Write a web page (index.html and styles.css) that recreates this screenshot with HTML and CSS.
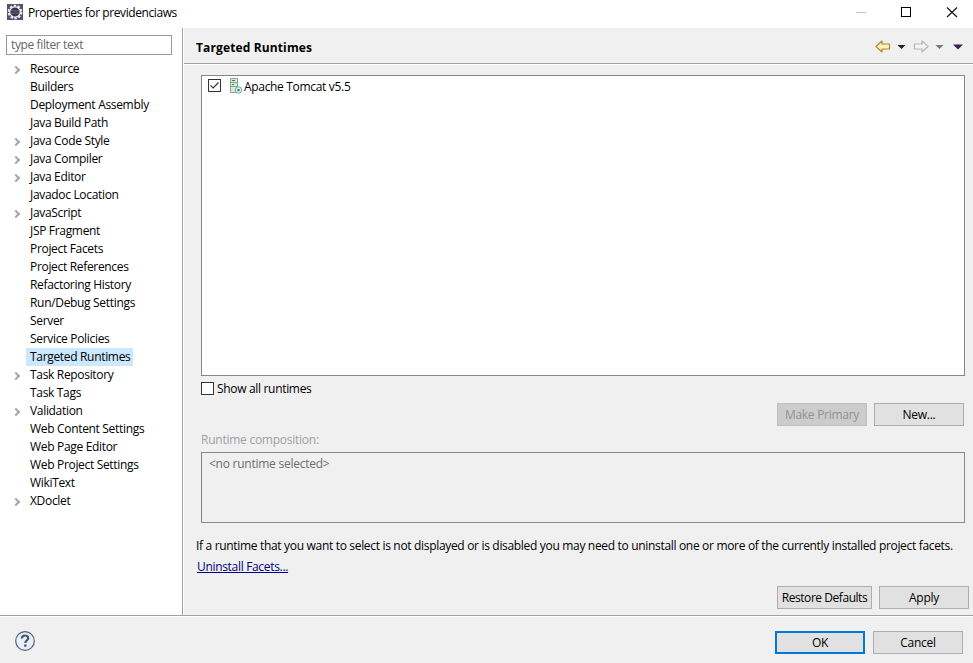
FILE: index.html
```html
<!DOCTYPE html>
<html lang="en">
<head>
<meta charset="utf-8">
<title>Properties for previdenciaws</title>
<link rel="stylesheet" href="styles.css">
</head>
<body>
<div class="window">
  <header class="titlebar">
    <svg class="app-icon" width="16" height="16" viewBox="0 0 16 16">
      <rect width="16" height="16" fill="#57516f"/>
      <circle cx="8" cy="8" r="6.300" fill="none" stroke="#f4f2f8" stroke-width="2" stroke-dasharray="2.400 1.550"/>
      <circle cx="8" cy="8" r="5.200" fill="#3a364c" stroke="#f4f2f8" stroke-width="1.200"/>
      <path d="M3.600 6.500h8.800M3.300 8h9.400M3.600 9.500h8.800" stroke="#66617a" stroke-width=".7"/>
    </svg>
    <span class="title">Properties for previdenciaws</span>
    <svg class="win-controls" width="118" height="28" viewBox="0 0 118 28" fill="none">
      <path d="M1 12.500h10" stroke="#c4c4c4"/>
      <rect x="46.500" y="7.500" width="9" height="9" stroke="#000"/>
      <path d="M92 7.500l10 9.500M102 7.500l-10 9.500" stroke="#111" stroke-width="1.100"/>
    </svg>
  </header>
  <div class="body">
    <aside class="sidebar">
      <div class="filter">type filter text</div>
      <ul class="tree">
        <li class="parent"><span>Resource</span></li>
        <li><span>Builders</span></li>
        <li><span>Deployment Assembly</span></li>
        <li><span>Java Build Path</span></li>
        <li class="parent"><span>Java Code Style</span></li>
        <li class="parent"><span>Java Compiler</span></li>
        <li class="parent"><span>Java Editor</span></li>
        <li><span>Javadoc Location</span></li>
        <li class="parent"><span>JavaScript</span></li>
        <li><span>JSP Fragment</span></li>
        <li><span>Project Facets</span></li>
        <li><span>Project References</span></li>
        <li><span>Refactoring History</span></li>
        <li><span>Run/Debug Settings</span></li>
        <li><span>Server</span></li>
        <li><span>Service Policies</span></li>
        <li class="selected"><span>Targeted Runtimes</span></li>
        <li class="parent"><span>Task Repository</span></li>
        <li><span>Task Tags</span></li>
        <li class="parent"><span>Validation</span></li>
        <li><span>Web Content Settings</span></li>
        <li><span>Web Page Editor</span></li>
        <li><span>Web Project Settings</span></li>
        <li><span>WikiText</span></li>
        <li class="parent"><span>XDoclet</span></li>
      </ul>
    </aside>
    <main class="page">
      <div class="page-head">
        <h1>Targeted Runtimes</h1>
        <svg class="nav" width="90" height="16" viewBox="0 0 90 16">
          <path d="M2 7.500L8 2V5H15.500V10H8V13Z" fill="#fff3b8" stroke="#b98327" stroke-width="1.200" stroke-linejoin="round"/>
          <path d="M23.500 6h8l-4 4z" fill="#222"/>
          <path d="M54 7.500L48 2V5H40.500V10H48V13Z" fill="#f5f5f5" stroke="#b5b5b5" stroke-width="1.200" stroke-linejoin="round"/>
          <path d="M61.500 6h8l-4 4z" fill="#777"/>
          <path d="M79 5.500h10l-5 5z" fill="#38204e"/>
        </svg>
      </div>
      <div class="page-content">
        <div class="runtimes">
          <div class="runtime">
            <svg class="check" width="13" height="13" viewBox="0 0 13 13"><rect x=".5" y=".5" width="12" height="12" fill="#fff" stroke="#333"/><path d="M2.500 6.300L5.200 9L10.500 3.500" fill="none" stroke="#333" stroke-width="1.200"/></svg>
            <svg class="server" width="14" height="16" viewBox="0 0 14 16">
              <path d="M1.500 .5H8.500V14.500H1.500Z" fill="#dde8da" stroke="#8ba392"/>
              <path d="M2 4.500H8M2 8.500H8" stroke="#8ba392"/>
              <path d="M3 2.500h3M3 6.500h2" stroke="#258957" stroke-width="1.200"/>
              <circle cx="9.500" cy="12" r="3.200" fill="#e8f6ee" stroke="#65a995"/>
              <circle cx="9.500" cy="12" r="1.300" fill="#328b65"/>
            </svg>
            <span class="text">Apache Tomcat v5.5</span>
          </div>
        </div>
        <div class="show-all">
          <svg width="13" height="13" viewBox="0 0 13 13"><rect x=".5" y=".5" width="12" height="12" fill="#fff" stroke="#333"/></svg>
          <span>Show all runtimes</span>
        </div>
        <div class="actions">
          <button class="primary" disabled>Make Primary</button>
          <button>New...</button>
        </div>
        <div class="comp-label">Runtime composition:</div>
        <div class="composition">&lt;no runtime selected&gt;</div>
      </div>
      <p class="note">If a runtime that you want to select is not displayed or is disabled you may need to uninstall one or more of the currently installed project facets.</p>
      <a class="link">Uninstall Facets...</a>
      <div class="page-buttons">
        <button class="restore">Restore Defaults</button>
        <button>Apply</button>
      </div>
    </main>
  </div>
  <footer class="footer">
    <svg class="help" width="20" height="20" viewBox="0 0 20 20">
      <circle cx="10" cy="10" r="9.300" fill="#e9eff8" stroke="#566078" stroke-width="1.200"/>
      <path d="M6.900 7.500C6.900 5.500 8.200 4.500 10 4.500S13.200 5.500 13.200 7.200C13.200 9.300 10.300 9.300 10.300 11.900" fill="none" stroke="#4b5875" stroke-width="2.200"/>
      <rect x="9.100" y="13.500" width="2.400" height="2.200" fill="#4b5875"/>
    </svg>
    <button class="ok">OK</button>
    <button class="cancel">Cancel</button>
  </footer>
</div>
</body>
</html>
```
FILE: styles.css
```css
*, *::before { box-sizing: border-box; }
body {
  margin: 0;
  background: #f0f0f0;
  color: #000;
  font: 12px/18px "Open Sans", "Noto Sans", sans-serif;
  letter-spacing: -0.32px;
}
.window { display: flex; flex-direction: column; width: 973px; height: 663px; overflow: hidden; }
.titlebar { display: flex; height: 28px; background: #fff; }
.app-icon { margin: 4px 5px 0 7px; }
.title { line-height: 26px; white-space: nowrap; letter-spacing: -0.41px; }
.win-controls { margin-left: auto; }
.body { display: flex; height: 587px; }
.sidebar { width: 183px; padding: 7px 10px 0 6px; background: #fff; border-right: 1px solid #a0a0a0; }
.filter { height: 20px; padding-left: 4px; border: 1px solid #999; line-height: 18px; color: #666; letter-spacing: -0.38px; }
.tree { margin: 5px 0 0; padding: 0 0 0 20px; list-style: none; white-space: nowrap; }
.tree li { display: flex; align-items: center; height: 18px; }
.tree span { padding: 0 4px; }
.parent::before {
  content: "";
  width: 6px;
  height: 6px;
  margin: 2px 7px 0 -13px;
  border: solid #a6a6a6;
  border-width: 1.5px 1.5px 0 0;
  border-width: 2px 2px 0 0;
  transform: rotate(45deg);
}
.selected span { padding-right: 3px; background: #cce8ff; }
.page { flex: 1; min-width: 0; border-left: 1px solid #fff; }
.page-head { display: flex; align-items: center; justify-content: space-between; height: 37px; padding: 2px 9px 0 12px; border-bottom: 1px solid #fff; box-shadow: inset 0 -1px #a0a0a0; }
h1 { margin: 0; padding-top: 1px; font-size: 12px; line-height: 18px; letter-spacing: 0.13px; }
.page-content { padding: 10px 8px 0 17px; }
.runtimes { height: 301px; border: 1px solid #828790; background: #fff; }
.runtime { display: flex; align-items: center; height: 20px; padding-left: 6px; }
.runtime .text { padding-top: 2px; }
.check { margin-top: -1px; }
.server { margin: 0 1px 0 8px; }
.show-all { display: flex; align-items: center; height: 18px; margin-top: 4px; gap: 3px; }
.show-all svg { margin-top: -1px; }
.actions { display: flex; justify-content: flex-end; gap: 7px; height: 23px; margin: 5px 1px 0 0; }
button {
  width: 90px;
  height: 23px;
  padding: 0;
  border: 1px solid #adadad;
  background: #e1e1e1;
  color: #000;
  font: inherit;
  letter-spacing: -0.25px;
  line-height: 21px;
  white-space: nowrap;
}
button:disabled { border-color: #bfbfbf; background: #ccc; color: #929292; }
.comp-label { height: 18px; margin-top: 5px; color: #a0a0a0; letter-spacing: -0.25px; }
.composition { height: 71px; margin-top: 3px; padding: 2px 7px; border: 1px solid #828790; color: #6d6d6d; letter-spacing: -0.25px; }
.note { margin: 14px 0 0 12px; white-space: nowrap; letter-spacing: -0.32px; }
.link { display: block; width: max-content; margin: 3px 0 0 13px; color: #000080; text-decoration: underline; }
.page-buttons { display: flex; justify-content: flex-end; gap: 7px; margin: 10px 4px 0 0; }
.primary { letter-spacing: -0.28px; }
.restore { width: 95px; letter-spacing: -0.45px; }
.footer { display: flex; flex: 1; border-top: 1px solid #a0a0a0; box-shadow: inset 0 1px #fff; padding: 15px 10px 0 15px; }
.help { margin-right: auto; }
.ok { border: 2px solid #0078d7; margin-right: 8px; line-height: 19px; }
```
